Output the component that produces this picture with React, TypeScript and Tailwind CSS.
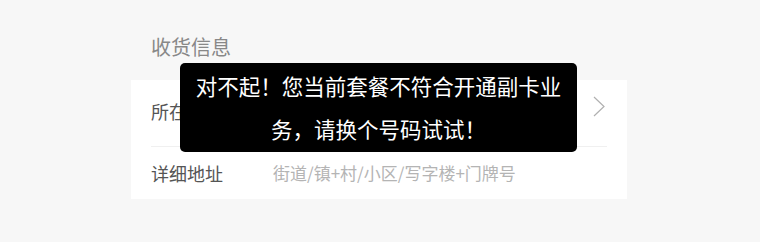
const font = { fontFamily: '"Noto Sans CJK SC", "Noto Sans", sans-serif' };

export default function App() {
  return (
    <div className="relative h-[242px] w-[760px] overflow-hidden bg-[#f7f7f7]" style={font}>
      <div className="ml-[131px] w-[496px]">
        <div className="h-[80px] px-[20px] pt-[35px] text-[20px] leading-[24px] text-[#888888]">收货信息</div>

        <div className="bg-white px-[20px]">
          <div className="flex h-[67px] items-center justify-between border-b border-[#f0f0f0]">
            <span className="mt-[-5px] text-[18px] leading-[24px] text-[#555555]">所在地区</span>
            <svg width="12" height="21" viewBox="0 0 12 21" className="mt-[-13px] mr-[2px]">
              <path d="M1 1 L11 10.5 L1 20" fill="none" stroke="#b0b0b0" strokeWidth="1.2" />
            </svg>
          </div>
          <div className="flex h-[52px] items-center">
            <span className="w-[122px] text-[18px] leading-[24px] text-[#555555]">详细地址</span>
            <span className="text-[17px] leading-[24px] text-[#b4b4b4]">街道/镇+村/小区/写字楼+门牌号</span>
          </div>
        </div>
      </div>

      <div className="absolute left-[180px] top-[63px] h-[89px] w-[397px] rounded-[5px] bg-black pt-[1px] text-center text-[21.5px] leading-[43px] text-white">
        对不起！您当前套餐不符合开通副卡业
        <br />
        务，请换个号码试试！
      </div>
    </div>
  );
}
